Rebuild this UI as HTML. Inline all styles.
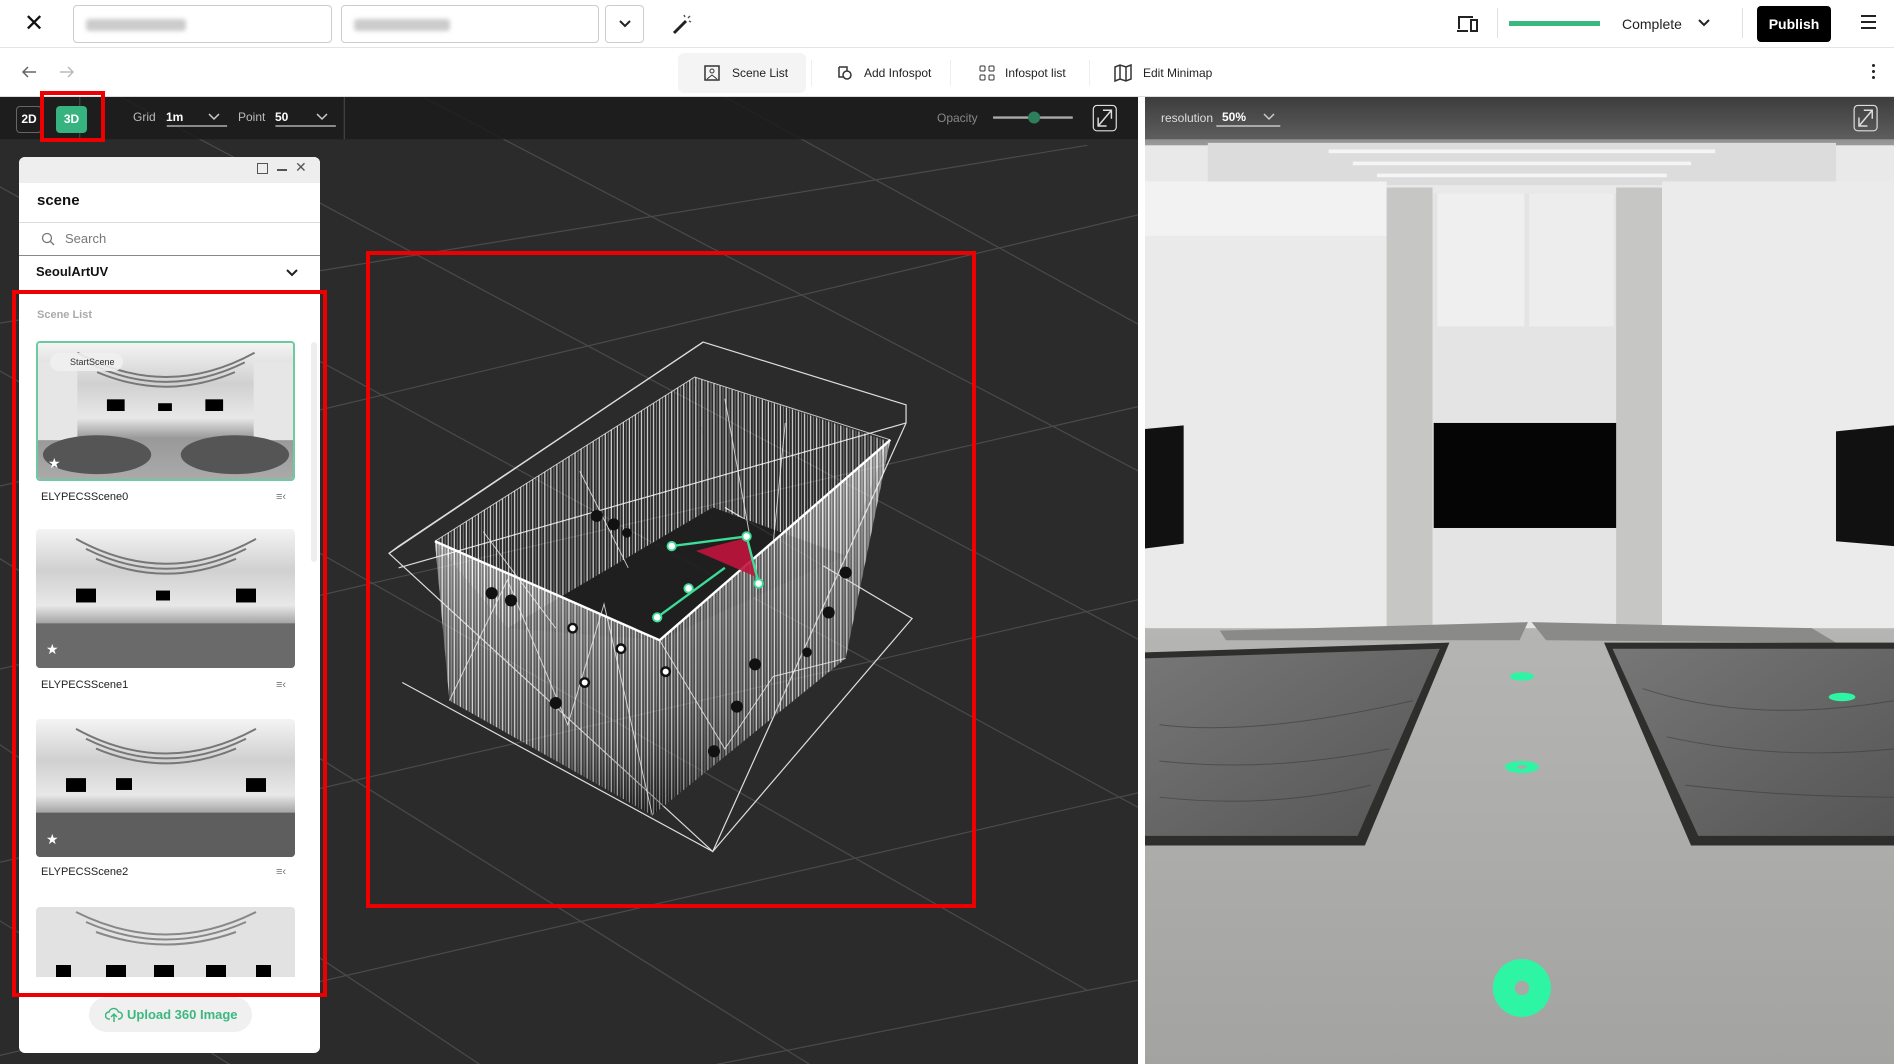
<!DOCTYPE html>
<html style="overflow:hidden;width:1894px;height:1064px"><head><meta charset="utf-8">
<style>
*{box-sizing:border-box;margin:0;padding:0}
body{width:1894px;height:1064px;overflow:hidden;background:#fff;font-family:"Liberation Sans",sans-serif;position:relative}
.abs{position:absolute}
.inp{position:absolute;top:5px;height:38px;border:1px solid #ccc;border-radius:4px;background:#fff}
.blur{position:absolute;top:13px;height:12px;background:#ccc;border-radius:3px;filter:blur(2px)}
.tb{position:absolute;top:58px;height:30px;display:flex;align-items:center;font-size:12px;color:#222;gap:10px}
.panel{position:absolute;left:19px;top:157px;width:301px;height:896px;background:#fff;border-radius:6px;overflow:hidden}
.thumb{position:absolute;left:36px;width:259px;border-radius:4px;overflow:hidden}
.name{position:absolute;left:41px;font-size:11px;color:#222}
.ic{position:absolute;left:276px;font-size:11px;color:#777}
</style></head><body>
<svg width="0" height="0" style="position:absolute;left:0;top:0"><defs>
<linearGradient id="pg" x1="0" y1="0" x2="0" y2="1"><stop offset="0" stop-color="#f4f4f4"/><stop offset=".3" stop-color="#d0d0d0"/><stop offset=".55" stop-color="#e8e8e8"/><stop offset=".7" stop-color="#999"/><stop offset="1" stop-color="#aaa"/></linearGradient>
</defs></svg>
<!-- top bar -->
<div class="abs" style="left:24px;top:10px;font-size:24px;color:#111;line-height:28px">✕</div>
<div class="inp" style="left:73px;width:259px"><div class="blur" style="left:12px;width:100px"></div></div>
<div class="inp" style="left:341px;width:258px"><div class="blur" style="left:12px;width:96px"></div></div>
<div class="inp" style="left:605px;width:39px;text-align:center;font-size:14px;line-height:36px">
<svg width="14" height="10" viewBox="0 0 14 10"><path d="M2 2l5 5 5-5" stroke="#222" stroke-width="2" fill="none"/></svg></div>
<svg class="abs" style="left:670px;top:12px" width="24" height="24" viewBox="0 0 24 24"><path d="M4 21L16 9" stroke="#222" stroke-width="3"/><path d="M14 3l1 2M20 4l-2 2M21 10l-2-1" stroke="#555" stroke-width="1.5"/></svg>
<div class="abs" style="left:0;top:47px;width:1894px;height:1px;background:#e4e4e4"></div>
<svg class="abs" style="left:1456px;top:14px" width="24" height="20" viewBox="0 0 24 20"><path d="M3 15V3h14M1 17h11" stroke="#222" stroke-width="2" fill="none"/><rect x="15" y="6" width="6" height="11" stroke="#222" stroke-width="2" fill="none"/></svg>
<div class="abs" style="left:1497px;top:8px;width:1px;height:30px;background:#e0e0e0"></div>
<div class="abs" style="left:1509px;top:21px;width:91px;height:5px;background:#3cb77f"></div>
<div class="abs" style="left:1622px;top:16px;font-size:14px;color:#222">Complete</div>
<svg class="abs" style="left:1697px;top:18px" width="14" height="10" viewBox="0 0 14 10"><path d="M2 2l5 5 5-5" stroke="#222" stroke-width="2" fill="none"/></svg>
<div class="abs" style="left:1742px;top:8px;width:1px;height:30px;background:#e0e0e0"></div>
<div class="abs" style="left:1757px;top:6px;width:74px;height:36px;background:#000;border-radius:4px;color:#fff;font-size:14px;font-weight:bold;text-align:center;line-height:36px">Publish</div>
<div class="abs" style="left:1861px;top:15px;width:15px;height:2px;background:#222;box-shadow:0 6px 0 #222,0 12px 0 #222"></div>
<!-- second bar -->
<svg class="abs" style="left:20px;top:64px" width="18" height="16" viewBox="0 0 18 16"><path d="M16 8H3M8 3L3 8l5 5" stroke="#666" stroke-width="1.5" fill="none"/></svg>
<svg class="abs" style="left:58px;top:64px" width="18" height="16" viewBox="0 0 18 16"><path d="M2 8h13M10 3l5 5-5 5" stroke="#bbb" stroke-width="1.5" fill="none"/></svg>
<div class="abs" style="left:678px;top:53px;width:128px;height:40px;background:#f4f4f4;border-radius:6px"></div>
<div class="tb" style="left:702px"><svg width="20" height="20" viewBox="0 0 20 20"><rect x="3" y="3" width="14" height="14" stroke="#333" fill="none" stroke-width="1.5"/><circle cx="10" cy="8" r="2" stroke="#333" fill="none"/><path d="M5 16l5-4 5 4" stroke="#333" fill="none"/></svg>Scene List</div>
<div class="abs" style="left:811px;top:60px;width:1px;height:26px;background:#eee"></div>
<div class="tb" style="left:836px"><svg width="18" height="18" viewBox="0 0 18 18"><path d="M3 3h8v4" stroke="#333" fill="none" stroke-width="1.5"/><path d="M3 3v10h4" stroke="#333" fill="none" stroke-width="1.5"/><circle cx="11" cy="11" r="4" stroke="#333" fill="none" stroke-width="1.5"/></svg>Add Infospot</div>
<div class="abs" style="left:950px;top:60px;width:1px;height:26px;background:#eee"></div>
<div class="tb" style="left:979px"><svg width="16" height="16" viewBox="0 0 16 16"><rect x="1" y="1" width="5" height="5" rx="1" stroke="#333" fill="none"/><rect x="10" y="1" width="5" height="5" rx="1" stroke="#333" fill="none"/><rect x="1" y="10" width="5" height="5" rx="1" stroke="#333" fill="none"/><rect x="10" y="10" width="5" height="5" rx="1" stroke="#333" fill="none"/></svg>Infospot list</div>
<div class="abs" style="left:1089px;top:60px;width:1px;height:26px;background:#eee"></div>
<div class="tb" style="left:1113px"><svg width="20" height="20" viewBox="0 0 20 20"><path d="M2 4l5-2 6 2 5-2v14l-5 2-6-2-5 2z M7 2v14 M13 4v14" stroke="#333" fill="none" stroke-width="1.5"/></svg>Edit Minimap</div>
<div class="abs" style="left:1872px;top:64px;width:3px;height:3px;background:#222;border-radius:2px;box-shadow:0 6px 0 #222,0 12px 0 #222"></div>
<div class="abs" style="left:0;top:96px;width:1894px;height:1px;background:#ddd"></div>

<!-- left viewer -->
<svg class="abs" style="left:0;top:97px" width="1138" height="967" viewBox="0 80 942 801" preserveAspectRatio="none">
<defs>
<pattern id="vl" width="5" height="800" patternUnits="userSpaceOnUse"><line x1="1" y1="0" x2="1" y2="800" stroke="#fff" stroke-width="0.9"/><line x1="3.5" y1="0" x2="3.5" y2="800" stroke="#bbb" stroke-width="0.5"/></pattern>
<linearGradient id="fade" x1="0" y1="0" x2="0" y2="1"><stop offset="0" stop-color="#fff" stop-opacity=".95"/><stop offset=".7" stop-color="#999" stop-opacity=".6"/><stop offset="1" stop-color="#000" stop-opacity=".9"/></linearGradient>
</defs>
<rect x="0" y="80" width="942" height="801" fill="#2b2b2b"/>
<g stroke="#4a4a4a" stroke-width="1" fill="none">
<path d="M-200 300L900 120M-200 450L1100 140M-200 600L1100 300M-200 760L1100 460M-200 920L1100 620M0 1000L1100 780M200 1100L1100 940"/>
<path d="M-100 100L1000 700M-100 250L900 820M-100 400L700 900M-100 550L500 950M100 80L1000 560M350 80L1000 420M600 80L1000 300M-100 700L300 950"/>
</g>
<rect x="0" y="80" width="942" height="35" fill="#1b1b1b" opacity=".85"/>
<g stroke="#ddd" stroke-width="1" fill="none">
<path d="M582 283L750 335L750 350L590 705L322 458L330 452Z"/>
<path d="M322 458L582 283M330 470L750 350"/>
<path d="M333 565L590 705L755 512L600 420"/>
</g>
<polygon points="360,448 575,312 590,420 420,520" fill="url(#vl)" opacity=".9"/>
<polygon points="575,312 735,365 700,460 590,420" fill="url(#vl)" opacity=".9"/>
<polygon points="420,520 590,420 700,460 546,530" fill="#1e1e1e" opacity=".9"/>
<polygon points="360,448 546,530 540,675 372,580" fill="url(#vl)"/>
<polygon points="360,448 546,530 540,675 372,580" fill="url(#fade)" opacity=".45"/>
<polygon points="546,530 737,364 700,545 540,675" fill="url(#vl)"/>
<polygon points="546,530 737,364 700,545 540,675" fill="url(#fade)" opacity=".45"/>
<g stroke="#fff" stroke-width="2" fill="none"><path d="M360 448L546 530L737 364"/></g>
<g stroke="#eee" stroke-width="0.8" fill="none" opacity=".8">
<path d="M360 448L575 312L737 364"/>
<path d="M372 580L420 480L470 600L500 500L540 675M546 530L600 620L640 560L700 545M600 330L620 440M650 350L640 450M400 440L460 520M480 390L520 470"/>
</g>
<polygon points="576,456 618,445 627,478" fill="#c0143c" opacity=".9"/>
<g stroke="#3ddc97" stroke-width="2" fill="none"><path d="M556 452L618 444L628 483M544 511L600 470"/></g>
<g fill="#fff" stroke="#3ddc97" stroke-width="1.5"><circle cx="556" cy="452" r="3.5"/><circle cx="618" cy="444" r="3.5"/><circle cx="628" cy="483" r="3.5"/><circle cx="570" cy="487" r="3.5"/><circle cx="544" cy="511" r="3.5"/></g>
<g fill="#fff" stroke="#111" stroke-width="2"><circle cx="474" cy="520" r="3.5"/><circle cx="514" cy="537" r="3.5"/><circle cx="484" cy="565" r="3.5"/><circle cx="551" cy="556" r="3.5"/></g>
<g fill="#111"><circle cx="494" cy="427" r="5"/><circle cx="508" cy="434" r="5"/><circle cx="519" cy="441" r="4"/><circle cx="407" cy="491" r="5"/><circle cx="423" cy="497" r="5"/><circle cx="460" cy="582" r="5"/><circle cx="625" cy="550" r="5"/><circle cx="610" cy="585" r="5"/><circle cx="591" cy="622" r="5"/><circle cx="668" cy="540" r="4"/><circle cx="686" cy="507" r="5"/><circle cx="700" cy="474" r="5"/></g>
<line x1="66" y1="80" x2="66" y2="115" stroke="#444"/>
<line x1="285" y1="80" x2="285" y2="115" stroke="#444"/>
<line x1="138" y1="104" x2="188" y2="104" stroke="#ccc"/>
<line x1="228" y1="104" x2="278" y2="104" stroke="#ccc"/>
<line x1="822" y1="97" x2="888" y2="97" stroke="#aaa" stroke-width="2"/>
<circle cx="856" cy="97" r="5" fill="#2e7d5b"/>
<rect x="905" y="87" width="19" height="21" rx="3" stroke="#ddd" fill="none"/>
<path d="M909 104l11-13M913 91h7v7M909 97v7h7" stroke="#ddd" fill="none" stroke-width="1.2"/>
</svg>
<div class="abs" style="left:16px;top:106px;width:26px;height:27px;border:1px solid #666;border-radius:4px;color:#fff;font-size:12px;font-weight:bold;text-align:center;line-height:25px">2D</div>
<div class="abs" style="left:56px;top:106px;width:31px;height:27px;background:#36b37e;border-radius:4px;color:#fff;font-size:12px;font-weight:bold;text-align:center;line-height:27px">3D</div>
<div class="abs" style="left:133px;top:110px;font-size:12px;color:#bbb">Grid</div>
<div class="abs" style="left:166px;top:110px;font-size:12px;color:#fff;font-weight:bold">1m</div>
<svg class="abs" style="left:207px;top:112px" width="14" height="10"><path d="M2 2l5 5 5-5" stroke="#ccc" stroke-width="1.5" fill="none"/></svg>
<div class="abs" style="left:238px;top:110px;font-size:12px;color:#bbb">Point</div>
<div class="abs" style="left:275px;top:110px;font-size:12px;color:#fff;font-weight:bold">50</div>
<svg class="abs" style="left:315px;top:112px" width="14" height="10"><path d="M2 2l5 5 5-5" stroke="#ccc" stroke-width="1.5" fill="none"/></svg>
<div class="abs" style="left:937px;top:111px;font-size:12px;color:#888">Opacity</div>

<div class="abs" style="left:40px;top:91px;width:65px;height:51px;border:4px solid #e00"></div>
<div class="abs" style="left:366px;top:251px;width:610px;height:657px;border:4px solid #e00"></div>

<!-- scene panel -->
<div class="panel">
<div class="abs" style="left:0;top:0;width:301px;height:26px;background:#eee"></div>
<div class="abs" style="left:238px;top:6px;width:11px;height:11px;border:1.5px solid #555"></div>
<div class="abs" style="left:258px;top:12px;width:10px;height:2px;background:#555"></div>
<div class="abs" style="left:276px;top:2px;font-size:14px;color:#555">✕</div>
<div class="abs" style="left:18px;top:35px;font-size:15px;font-weight:bold;color:#111">scene</div>
<div class="abs" style="left:0;top:65px;width:301px;height:1px;background:#ddd"></div>
<svg class="abs" style="left:22px;top:75px" width="14" height="14"><circle cx="6" cy="6" r="4.5" stroke="#777" fill="none" stroke-width="1.3"/><path d="M9 9l4 4" stroke="#777" stroke-width="1.3"/></svg>
<div class="abs" style="left:46px;top:74px;font-size:13px;color:#777">Search</div>
<div class="abs" style="left:0;top:98px;width:301px;height:1px;background:#888"></div>
<div class="abs" style="left:17px;top:107px;font-size:13px;font-weight:bold;color:#111">SeoulArtUV</div>
<svg class="abs" style="left:266px;top:111px" width="14" height="10"><path d="M2 2l5 5 5-5" stroke="#222" stroke-width="2" fill="none"/></svg>
<div class="abs" style="left:18px;top:152px;font-size:11px;font-weight:bold;color:#aaa">Scene List</div>
<div class="abs" style="left:292px;top:185px;width:6px;height:220px;background:#eee;border-radius:3px"></div>
<div class="abs" style="left:70px;top:840px;width:163px;height:35px;background:#f0f0f0;border-radius:18px;color:#3cb77f;font-size:13px;font-weight:bold;line-height:35px;padding-left:38px">Upload 360 Image</div>
<svg class="abs" style="left:86px;top:850px" width="18" height="16" viewBox="0 0 18 16"><path d="M5 12H4a3.5 3.5 0 0 1 0-7 5 5 0 0 1 9.5 0A3.5 3.5 0 0 1 14 12h-1M9 15V8M6 10l3-3 3 3" stroke="#3cb77f" stroke-width="1.5" fill="none"/></svg>
</div>
<!-- thumbnails -->
<div class="thumb" style="top:341px;height:140px;border:2px solid #6cc9a0">
<svg width="100%" height="100%" viewBox="0 0 259 140" preserveAspectRatio="none"><rect width="259" height="140" fill="url(#pg)"/><rect x="0" y="20" width="40" height="80" fill="#e6e6e6"/><rect x="219" y="20" width="40" height="80" fill="#e6e6e6"/><g stroke="#777" fill="none" stroke-width="2"><path d="M40 10Q130 60 220 10M50 20Q130 60 210 20M60 30Q130 60 200 30"/></g><rect x="70" y="58" width="18" height="12" fill="#000"/><rect x="170" y="58" width="18" height="12" fill="#000"/><rect x="122" y="62" width="14" height="8" fill="#000"/><ellipse cx="60" cy="115" rx="55" ry="20" fill="#555"/><ellipse cx="200" cy="115" rx="55" ry="20" fill="#555"/></svg>
<div class="abs" style="left:12px;top:10px;width:73px;height:18px;background:rgba(240,240,240,.9);border-radius:9px;font-size:9px;color:#333;line-height:18px;padding-left:20px">StartScene</div>
<div class="abs" style="left:10px;top:112px;color:#fff;font-size:14px">★</div></div>
<div class="name" style="top:491px">ELYPECSScene0</div><div class="ic" style="top:491px">≡‹</div>
<div class="thumb" style="top:529px;height:139px">
<svg width="100%" height="100%" viewBox="0 0 259 140" preserveAspectRatio="none"><rect width="259" height="140" fill="url(#pg)"/><g stroke="#777" fill="none" stroke-width="2"><path d="M40 10Q130 60 220 10M50 20Q130 60 210 20M60 30Q130 60 200 30"/></g><rect x="40" y="60" width="20" height="14" fill="#000"/><rect x="200" y="60" width="20" height="14" fill="#000"/><rect x="120" y="62" width="14" height="10" fill="#000"/><rect x="0" y="95" width="259" height="45" fill="#6a6a6a"/></svg>
<div class="abs" style="left:10px;top:112px;color:#fff;font-size:14px">★</div></div>
<div class="name" style="top:679px">ELYPECSScene1</div><div class="ic" style="top:679px">≡‹</div>
<div class="thumb" style="top:719px;height:138px">
<svg width="100%" height="100%" viewBox="0 0 259 140" preserveAspectRatio="none"><rect width="259" height="140" fill="url(#pg)"/><g stroke="#777" fill="none" stroke-width="2"><path d="M40 10Q130 60 220 10M50 20Q130 60 210 20M60 30Q130 60 200 30"/></g><rect x="30" y="60" width="20" height="14" fill="#000"/><rect x="210" y="60" width="20" height="14" fill="#000"/><rect x="80" y="60" width="16" height="12" fill="#000"/><rect x="0" y="95" width="259" height="45" fill="#5e5e5e"/></svg>
<div class="abs" style="left:10px;top:112px;color:#fff;font-size:14px">★</div></div>
<div class="name" style="top:866px">ELYPECSScene2</div><div class="ic" style="top:866px">≡‹</div>
<div class="thumb" style="top:907px;height:70px;border-radius:4px 4px 0 0">
<svg width="100%" height="100%" viewBox="0 0 259 70" preserveAspectRatio="none"><rect width="259" height="70" fill="#e2e2e2"/><g stroke="#888" fill="none" stroke-width="2"><path d="M40 5Q130 50 220 5M50 15Q130 50 210 15M60 25Q130 50 200 25"/></g><rect x="20" y="58" width="15" height="12" fill="#000"/><rect x="70" y="58" width="20" height="12" fill="#000"/><rect x="118" y="58" width="20" height="12" fill="#000"/><rect x="170" y="58" width="20" height="12" fill="#000"/><rect x="220" y="58" width="15" height="12" fill="#000"/></svg></div>
<div class="abs" style="left:12px;top:290px;width:315px;height:707px;border:4px solid #e00"></div>

<div class="abs" style="left:1138px;top:97px;width:7px;height:967px;background:#fff"></div>

<!-- right viewer -->
<svg class="abs" style="left:1145px;top:97px" width="749" height="967" viewBox="948 80 620 801" preserveAspectRatio="none">
<defs>
<linearGradient id="fl" x1="0" y1="0" x2="0" y2="1"><stop offset="0" stop-color="#b5b5b3"/><stop offset="1" stop-color="#a3a3a1"/></linearGradient>
<linearGradient id="mb" x1="0" y1="0" x2="1" y2="1"><stop offset="0" stop-color="#777"/><stop offset="1" stop-color="#555"/></linearGradient>
<linearGradient id="ceil" x1="0" y1="0" x2="0" y2="1"><stop offset="0" stop-color="#555"/><stop offset="1" stop-color="#9a9a9a"/></linearGradient>
</defs>
<rect x="948" y="80" width="620" height="801" fill="#e9e9e9"/>
<rect x="948" y="80" width="620" height="40" fill="url(#ceil)"/>
<rect x="1000" y="118" width="520" height="35" fill="#dcdcdc"/>
<path d="M1100 125h320M1120 135h280M1140 145h240" stroke="#f5f5f5" stroke-width="3"/>
<rect x="948" y="150" width="200" height="380" fill="#eaeaea"/>
<rect x="948" y="150" width="200" height="45" fill="#f2f2f2"/>
<rect x="1148" y="155" width="38" height="375" fill="#c6c6c4"/>
<rect x="1186" y="160" width="152" height="370" fill="#e4e4e4"/>
<rect x="1190" y="160" width="72" height="110" fill="#efefef"/><rect x="1266" y="160" width="70" height="110" fill="#ededed"/>
<rect x="1338" y="155" width="38" height="375" fill="#c6c6c4"/>
<rect x="1376" y="150" width="192" height="380" fill="#ebebeb"/>
<rect x="1187" y="350" width="151" height="87" fill="#050505"/>
<polygon points="948,355 980,352 980,450 948,454" fill="#111"/>
<polygon points="1520,357 1568,352 1568,452 1520,448" fill="#111"/>
<rect x="948" y="520" width="620" height="361" fill="url(#fl)"/>
<polygon points="1010,522 1265,515 1258,530 1015,530" fill="#8a8a88"/>
<polygon points="1268,515 1500,520 1520,532 1280,530" fill="#8a8a88"/>
<polygon points="948,540 1200,532 1130,700 948,700" fill="#2e2e2c"/>
<polygon points="948,545 1192,537 1124,692 948,692" fill="url(#mb)"/>
<polygon points="1328,532 1568,532 1568,700 1400,700" fill="#2e2e2c"/>
<polygon points="1335,537 1568,537 1568,692 1406,692" fill="url(#mb)"/>
<g stroke="#3a3a3a" stroke-width="0.8" fill="none" opacity=".6">
<path d="M960 600Q1040 610 1170 580M960 630Q1050 640 1150 620M960 660Q1050 670 1135 650M1360 570Q1450 600 1568 580M1380 610Q1470 630 1568 620M1395 650Q1480 660 1568 660"/></g>
<g fill="#2ef5a3"><ellipse cx="1260" cy="560" rx="10" ry="3.5"/><ellipse cx="1260" cy="635" rx="14" ry="5"/><ellipse cx="1525" cy="577" rx="11" ry="3.5"/><circle cx="1260" cy="818" r="24"/></g>
<circle cx="1260" cy="818" r="6" fill="#a8a8a6"/><ellipse cx="1260" cy="635" rx="4" ry="1.6" fill="#aaa"/>
<rect x="948" y="80" width="620" height="35" fill="#1e1e1e" opacity=".45"/>
<line x1="1007" y1="104" x2="1060" y2="104" stroke="#ddd"/>
<rect x="1535" y="87" width="19" height="21" rx="3" stroke="#ddd" fill="none"/>
<path d="M1539 104l11-13M1543 91h7v7M1539 97v7h7" stroke="#ddd" fill="none" stroke-width="1.2"/>
</svg>
<div class="abs" style="left:1161px;top:111px;font-size:12px;color:#ddd">resolution</div>
<div class="abs" style="left:1222px;top:110px;font-size:12px;color:#fff;font-weight:bold">50%</div>
<svg class="abs" style="left:1262px;top:112px" width="14" height="10"><path d="M2 2l5 5 5-5" stroke="#ccc" stroke-width="1.5" fill="none"/></svg>
</body></html>
